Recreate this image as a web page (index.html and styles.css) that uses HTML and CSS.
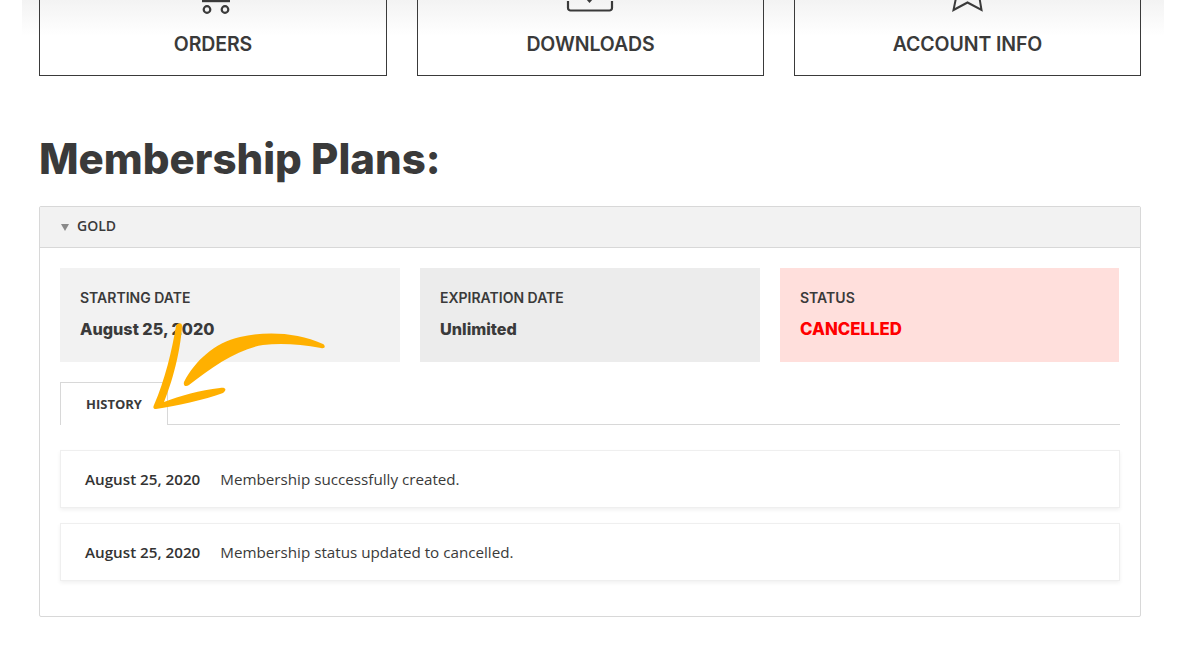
FILE: index.html
```html
<!DOCTYPE html>
<html lang="en">
<head>
<meta charset="utf-8">
<title>Membership Plans</title>
<link rel="stylesheet" href="styles.css">
</head>
<body>
<div class="shade"></div>
<main class="page">
  <nav class="tiles">
    <a class="tile">
      <svg class="tile-icon" width="40" height="14" viewBox="0 0 40 14"><path d="M9 1h28" stroke="#3a3a3a" stroke-width="2.400" fill="none"/><circle cx="14" cy="9.500" r="3.300" stroke="#3a3a3a" stroke-width="2.200" fill="none"/><circle cx="32" cy="9.500" r="3.300" stroke="#3a3a3a" stroke-width="2.200" fill="none"/></svg>
      <span>ORDERS</span>
    </a>
    <a class="tile">
      <svg class="tile-icon" width="50" height="14" viewBox="0 0 50 14"><path d="M2 1v7a2.500 2.500 0 0 0 2.500 2.500h39a2.500 2.500 0 0 0 2.500-2.500v-7" stroke="#3a3a3a" stroke-width="2.200" fill="none"/><path d="M20 -1h7l-3.500 4z" fill="#3a3a3a"/></svg>
      <span>DOWNLOADS</span>
    </a>
    <a class="tile">
      <svg class="tile-icon" width="40" height="14" viewBox="0 0 40 14"><path d="M8 -2L5.500 10L19.500 2.500L33.500 10L31.500 -2" stroke="#3a3a3a" stroke-width="2" fill="none"/></svg>
      <span>ACCOUNT INFO</span>
    </a>
  </nav>

  <h1 class="title">Membership Plans:</h1>

  <section class="plan">
    <header class="plan-head"><i class="caret"></i>GOLD</header>
    <div class="plan-body">
      <div class="facts">
        <div class="fact fact-a"><div class="fact-label">STARTING DATE</div><div class="fact-value">August 25, 2020</div></div>
        <div class="fact fact-b"><div class="fact-label">EXPIRATION DATE</div><div class="fact-value">Unlimited</div></div>
        <div class="fact fact-c"><div class="fact-label">STATUS</div><div class="fact-value fact-red">CANCELLED</div></div>
      </div>
      <div class="tabs"><div class="tab">HISTORY</div></div>
      <div class="row"><b>August 25, 2020</b><span>Membership successfully created.</span></div>
      <div class="row"><b>August 25, 2020</b><span>Membership status updated to cancelled.</span></div>
    </div>
  </section>
</main>
<svg class="arrow" width="190" height="100" viewBox="145 315 190 100"><path d="M176 326C177 323 182 322 182 326C181 345 175 375 164 402C180 396 200 390 220 388C226 387 227 390 223 393C205 400 175 406 156 409C153 409 153 407 154 405C165 380 172 350 176 326Z" fill="#ffb000"/><path d="M184 382C195 361 214 343 240 337C265 331 297 332 323 344C326 346 325 349 321 348C300 344 280 343 263 345C238 349 212 367 189 385C186 387 183 386 184 382Z" fill="#ffb000"/></svg>
</body>
</html>
```

FILE: styles.css
```css
* { box-sizing: border-box; }
html, body { margin: 0; height: 656px; overflow: hidden; background: #fff; }
body { position: relative; color: #3a3a3a; font-family: "Open Sans", sans-serif; }
.shade { position: absolute; left: 22px; top: 0; width: 1142px; height: 36px; background: linear-gradient(#f3f3f3, #fff); }
.page { position: relative; padding: 0 45px 0 39px; }
.tiles { display: grid; grid-template-columns: 348px 347px 347px; gap: 30px; margin-top: -1px; }
.tile { height: 77px; border: 1px solid #3a3a3a; border-top: 0; display: flex; flex-direction: column; align-items: center; }
.tile-icon { display: block; overflow: visible; margin-top: 1px; }
.tile span { margin-top: 18px; font: 600 19.500px/24px Inter, sans-serif; letter-spacing: -0.1px; }
.title { margin: 58px 0 22px; font: 800 42px/50px Inter, sans-serif; color: #3a3a3a; }
.plan { border: 1px solid #d8d8d8; border-radius: 2px; height: 411px; }
.plan-head { height: 41px; background: #f2f2f2; border-bottom: 1px solid #d8d8d8; display: flex; align-items: center; padding: 0 0 4px 21px; font-size: 14px; font-weight: 600; }
.caret { width: 0; height: 0; margin: 5px 8px 0 0; border-left: 4.500px solid transparent; border-right: 4.500px solid transparent; border-top: 7px solid #8a8a8a; }
.plan-body { padding: 20px 20px 0; }
.facts { display: grid; grid-template-columns: 340px 340px 339px; gap: 20px; }
.fact { height: 94px; padding: 21px 20px 0; }
.fact-a { background: #f2f2f2; }
.fact-b { background: #ececec; }
.fact-c { background: #ffdfdc; }
.fact-label { font: 600 14px/18px Inter, sans-serif; }
.fact-value { margin-top: 12px; font: 800 16.200px/20px Inter, sans-serif; }
.fact-red { color: #f00; font-size: 16.800px; }
.tabs { margin-top: 20px; height: 43px; border-bottom: 1px solid #d8d8d8; }
.tab { width: 108px; height: 43px; border: 1px solid #d8d8d8; border-bottom: 0; background: #fff; font-size: 13px; font-weight: 700; line-height: 43px; text-align: center; }
.row { height: 58px; margin-top: 15px; padding-left: 24px; display: flex; align-items: center; gap: 20px; border: 1px solid #efefef; box-shadow: 0 2px 4px rgba(0,0,0,.06); font-size: 15.200px; }
.tabs + .row { margin-top: 25px; }
.row b { font-weight: 600; color: #333; }
.arrow { position: absolute; left: 145px; top: 315px; }
```
